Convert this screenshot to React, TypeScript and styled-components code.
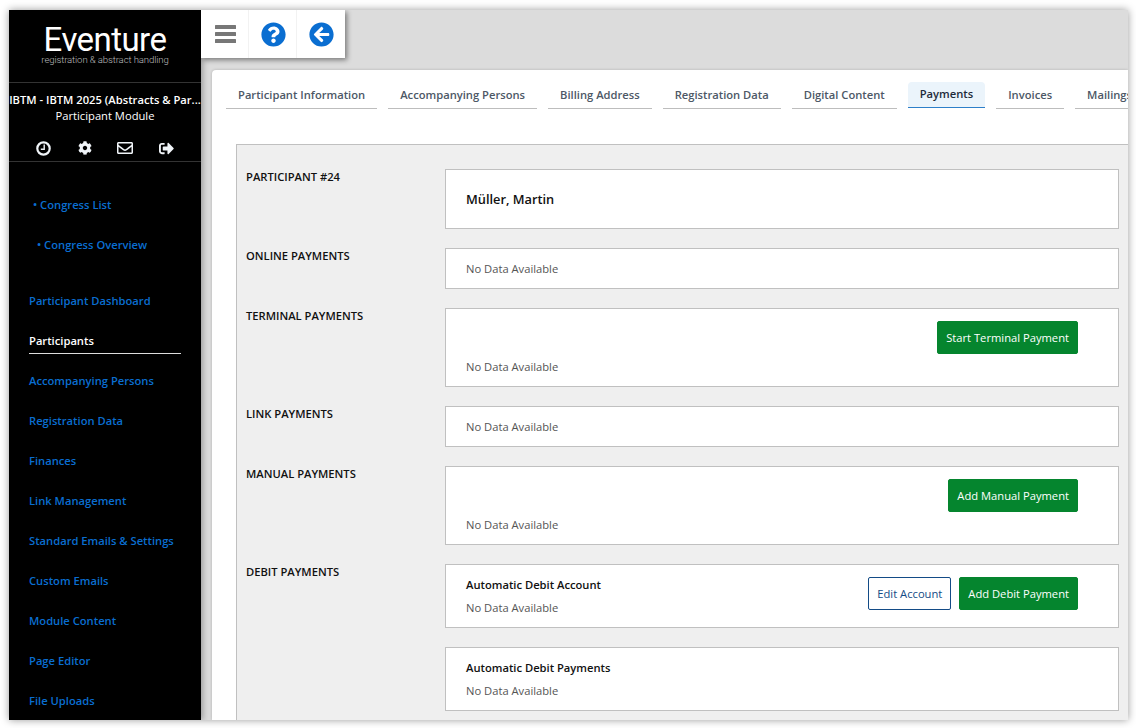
import React from 'react';
import styled, { createGlobalStyle } from 'styled-components';
import { FaQuestionCircle, FaArrowCircleLeft, FaCog, FaRegEnvelope, FaSignOutAlt } from 'react-icons/fa';

const GlobalStyle = createGlobalStyle`
  html, body {
    margin: 0;
    padding: 0;
    background: #fff;
    height: 100%;
    overflow: hidden;
  }
  * { box-sizing: border-box; }
`;

const Page = styled.div`
  width: 1136px;
  height: 728px;
  padding: 10px 8px 8px 9px;
  font-family: "Open Sans", "Noto Sans", sans-serif;
`;

const Frame = styled.div`
  display: flex;
  width: 1119px;
  height: 710px;
  overflow: hidden;
  background: #dcdcdc;
  box-shadow: 0 0 8px rgba(0, 0, 0, 0.4);
`;

const Sidebar = styled.aside`
  flex: 0 0 192px;
  background: #000;
  color: #fff;
  display: flex;
  flex-direction: column;
  position: relative;
  box-shadow: 2px 0 6px rgba(0, 0, 0, 0.3);
`;

const Brand = styled.div`
  height: 75px;
  border-bottom: 1px solid #333;
  display: flex;
  flex-direction: column;
  align-items: center;
  padding-top: 15px;
`;

const BrandName = styled.div`
  font-family: Roboto, sans-serif;
  font-weight: 400;
  font-size: 33px;
  line-height: 30px;
  letter-spacing: -0.55px;
  color: #fff;
`;

const BrandTag = styled.div`
  font-family: Roboto, sans-serif;
  font-weight: 300;
  font-size: 9.6px;
  line-height: 9px;
  letter-spacing: -0.12px;
  color: #bdbdbd;
`;

const Congress = styled.div`
  height: 81px;
  border-bottom: 1px solid #333;
  text-align: center;
  padding-top: 9px;
`;

const CongressTitle = styled.div`
  font-size: 11.2px;
  font-weight: 600;
  line-height: 16px;
  white-space: nowrap;
  overflow: hidden;
`;

const CongressModule = styled.div`
  font-size: 11.2px;
  line-height: 16px;
`;

const SideIcons = styled.div`
  display: flex;
  justify-content: center;
  align-items: center;
  gap: 24.7px;
  margin-top: 15px;
  height: 18px;
  font-size: 15px;
  color: #f0f4f8;
`;

const IconSlot = styled.span`
  width: 16px;
  display: flex;
  justify-content: center;
`;

const Nav = styled.nav`
  display: flex;
  flex-direction: column;
  padding: 22px 20px 0;
`;

const NavItem = styled.a<{ $active?: boolean; $indent?: number; $gapAfter?: number }>`
  height: 40px;
  flex: none;
  display: flex;
  align-items: center;
  font-size: 11.2px;
  font-weight: 600;
  padding-left: ${({ $indent }) => $indent || 0}px;
  margin-bottom: ${({ $gapAfter }) => $gapAfter || 0}px;
  color: ${({ $active }) => ($active ? '#fff' : '#0a6ed1')};
  ${({ $active }) => $active && `
    position: relative;
    &::after {
      content: '';
      position: absolute;
      left: 0;
      right: 0;
      bottom: 6px;
      height: 1px;
      background: #ddd;
    }
  `}
`;

const Main = styled.main`
  flex: 1;
  min-width: 0;
  display: flex;
  flex-direction: column;
`;

const Toolbar = styled.div`
  display: flex;
  width: 144px;
  height: 48px;
  flex: none;
  background: #fff;
  position: relative;
  box-shadow: 2px 2px 5px rgba(0, 0, 0, 0.45);
`;

const ToolButton = styled.button<{ $color: string }>`
  width: 48px;
  height: 48px;
  border: 0;
  border-right: 1px solid #f2f2f2;
  background: none;
  padding: 0 0 0 1px;
  display: flex;
  align-items: center;
  justify-content: center;
  font-size: 25px;
  color: ${({ $color }) => $color};
  &:last-child { border-right: 0; padding-left: 0; }
`;

const Card = styled.section`
  flex: 1;
  min-height: 0;
  margin: 12px 0 0 11px;
  background: #fff;
  border-radius: 4px 0 0 0;
  box-shadow: 0 0 3px rgba(0, 0, 0, 0.2);
  overflow: hidden;
  padding: 12px 0 0 14px;
  display: flex;
  flex-direction: column;
`;

const Tabs = styled.div`
  display: flex;
  align-items: flex-start;
  gap: 11px;
  flex: none;
  white-space: nowrap;
  height: 27px;
`;

const Tab = styled.div<{ $active?: boolean }>`
  flex: none;
  height: ${({ $active }) => ($active ? '26px' : '27px')};
  padding: 0 12px ${({ $active }) => ($active ? '3px' : '2px')};
  display: flex;
  align-items: center;
  font-size: 11.2px;
  font-weight: 600;
  border-bottom: 1px solid ${({ $active }) => ($active ? '#2d7fc9' : '#bdbdbd')};
  color: ${({ $active }) => ($active ? '#1d2b3a' : '#4d5866')};
  background: ${({ $active }) => ($active ? '#ebf4fb' : 'transparent')};
  border-radius: ${({ $active }) => ($active ? '4px 4px 0 0' : '0')};
`;

const Panel = styled.div`
  margin: 35px 0 0 10px;
  flex: 1;
  background: #efefef;
  border: 1px solid #c0c0c0;
  border-right: 0;
  border-bottom: 0;
  padding: 24px 9px 0;
  display: flex;
  flex-direction: column;
  gap: 19px;
`;

const Row = styled.div`
  display: grid;
  grid-template-columns: 199px 674px;
`;

const Label = styled.div`
  font-size: 11.2px;
  font-weight: 600;
  line-height: 16px;
  color: #111;
`;

const Stack = styled.div`
  display: flex;
  flex-direction: column;
  gap: 19px;
`;

const Box = styled.div<{ $height: number; $top?: boolean }>`
  height: ${({ $height }) => $height}px;
  background: #fff;
  border: 1px solid #c0c0c0;
  padding: ${({ $top }) => ($top ? '12px' : '0')} 20px 0;
  display: flex;
  flex-direction: column;
  justify-content: ${({ $top }) => ($top ? 'flex-start' : 'center')};
`;

const Name = styled.div`
  font-size: 12.8px;
  font-weight: 600;
  color: #111;
`;

const Empty = styled.div`
  font-size: 11.2px;
  line-height: 16px;
  color: #555;
`;

const SubTitle = styled.div`
  font-size: 11.2px;
  font-weight: 600;
  line-height: 16px;
  color: #111;
  margin-bottom: 7px;
`;

const ActionRow = styled.div`
  display: flex;
  justify-content: flex-end;
  padding-right: 20px;
  margin-bottom: 5px;
`;

const SplitRow = styled.div`
  display: flex;
  justify-content: space-between;
  align-items: flex-start;
  padding-right: 20px;
`;

const ButtonGroup = styled.div`
  display: flex;
  gap: 8px;
`;

const Button = styled.button<{ $outline?: boolean }>`
  height: 33px;
  padding: 0 8px;
  font-family: inherit;
  font-size: 11.2px;
  border-radius: 2px;
  white-space: nowrap;
  border: 1px solid ${({ $outline }) => ($outline ? '#134b86' : '#05852e')};
  background: ${({ $outline }) => ($outline ? '#fff' : '#05852e')};
  color: ${({ $outline }) => ($outline ? '#134b86' : '#fff')};
`;

const tabs = ['Participant Information', 'Accompanying Persons', 'Billing Address', 'Registration Data', 'Digital Content', 'Payments', 'Invoices', 'Mailings'];
const navItems = ['Accompanying Persons', 'Registration Data', 'Finances', 'Link Management', 'Standard Emails & Settings', 'Custom Emails', 'Module Content', 'Page Editor', 'File Uploads'];

const ClockIcon = () => (
  <svg width="15" height="15" viewBox="0 0 15 15" fill="none" stroke="currentColor">
    <circle cx="7.5" cy="7.5" r="6.2" strokeWidth="2.2" />
    <path d="M8.2 3.6v4.6H4.8" strokeWidth="1.4" />
  </svg>
);

const MenuIcon = () => (
  <svg width="21" height="18" viewBox="0 0 21 18" fill="currentColor">
    <rect x="0" y="0" width="21" height="4" rx="0.5" />
    <rect x="0" y="7" width="21" height="4" rx="0.5" />
    <rect x="0" y="14" width="21" height="4" rx="0.5" />
  </svg>
);

export default function App() {
  return (
    <Page>
      <GlobalStyle />
      <Frame>
        <Sidebar>
          <Brand>
            <BrandName>Eventure</BrandName>
            <BrandTag>registration &amp; abstract handling</BrandTag>
          </Brand>
          <Congress>
            <CongressTitle>IBTM - IBTM 2025 (Abstracts &amp; Par...</CongressTitle>
            <CongressModule>Participant Module</CongressModule>
            <SideIcons>
              <IconSlot><ClockIcon /></IconSlot>
              <IconSlot><FaCog size={14} /></IconSlot>
              <IconSlot><FaRegEnvelope size={18} /></IconSlot>
              <IconSlot><FaSignOutAlt /></IconSlot>
            </SideIcons>
          </Congress>
          <Nav>
            <NavItem $indent={4}>• Congress List</NavItem>
            <NavItem $indent={8} $gapAfter={16}>• Congress Overview</NavItem>
            <NavItem>Participant Dashboard</NavItem>
            <NavItem $active>Participants</NavItem>
            {navItems.map(item => <NavItem key={item}>{item}</NavItem>)}
          </Nav>
        </Sidebar>
        <Main>
          <Toolbar>
            <ToolButton $color="#777"><MenuIcon /></ToolButton>
            <ToolButton $color="#0a6ed1"><FaQuestionCircle /></ToolButton>
            <ToolButton $color="#0a6ed1"><FaArrowCircleLeft /></ToolButton>
          </Toolbar>
          <Card>
            <Tabs>
              {tabs.map(tab => <Tab key={tab} $active={tab === 'Payments'}>{tab}</Tab>)}
            </Tabs>
            <Panel>
              <Row>
                <Label>PARTICIPANT #24</Label>
                <Box $height={60}><Name>Müller, Martin</Name></Box>
              </Row>
              <Row>
                <Label>ONLINE PAYMENTS</Label>
                <Box $height={41}><Empty>No Data Available</Empty></Box>
              </Row>
              <Row>
                <Label>TERMINAL PAYMENTS</Label>
                <Box $height={79} $top>
                  <ActionRow><Button>Start Terminal Payment</Button></ActionRow>
                  <Empty>No Data Available</Empty>
                </Box>
              </Row>
              <Row>
                <Label>LINK PAYMENTS</Label>
                <Box $height={41}><Empty>No Data Available</Empty></Box>
              </Row>
              <Row>
                <Label>MANUAL PAYMENTS</Label>
                <Box $height={79} $top>
                  <ActionRow><Button>Add Manual Payment</Button></ActionRow>
                  <Empty>No Data Available</Empty>
                </Box>
              </Row>
              <Row>
                <Label>DEBIT PAYMENTS</Label>
                <Stack>
                  <Box $height={64} $top>
                    <SplitRow>
                      <div>
                        <SubTitle>Automatic Debit Account</SubTitle>
                        <Empty>No Data Available</Empty>
                      </div>
                      <ButtonGroup>
                        <Button $outline>Edit Account</Button>
                        <Button>Add Debit Payment</Button>
                      </ButtonGroup>
                    </SplitRow>
                  </Box>
                  <Box $height={64} $top>
                    <SubTitle>Automatic Debit Payments</SubTitle>
                    <Empty>No Data Available</Empty>
                  </Box>
                </Stack>
              </Row>
            </Panel>
          </Card>
        </Main>
      </Frame>
    </Page>
  );
}
